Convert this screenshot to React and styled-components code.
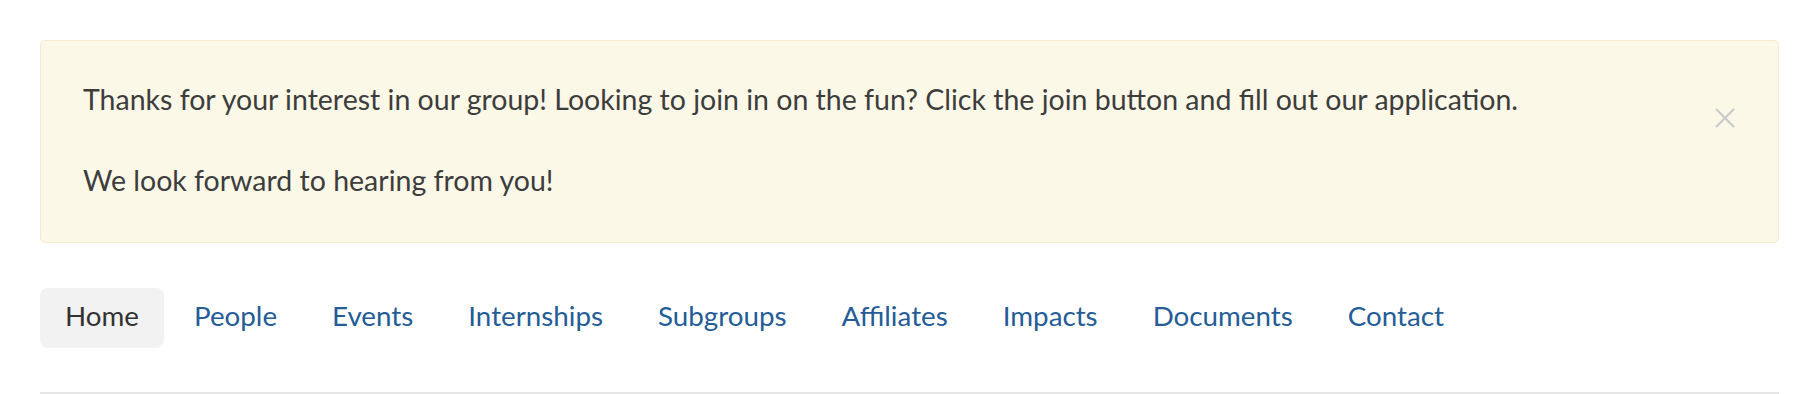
import React, { useState } from 'react';
import styled, { createGlobalStyle } from 'styled-components';

const GlobalStyle = createGlobalStyle`
  * { box-sizing: border-box; }
  body {
    margin: 0;
    background: #ffffff;
    font-family: Lato, "Open Sans", sans-serif;
    color: #3a3a3a;
  }
`;

const Page = styled.div`
  padding: 40px 23px 0 40px;
`;

const Alert = styled.div`
  position: relative;
  background-color: #fbf8e7;
  border: 1px solid #f6ebd2;
  border-radius: 5px;
  padding: 38px 100px 42px 42px;
  margin-bottom: 45px;
`;

const AlertText = styled.p`
  margin: 0;
  font-size: 28.5px;
  line-height: 40px;
  color: #3d3d3d;

  & + & {
    margin-top: 41px;
  }
`;

const CloseButton = styled.button`
  position: absolute;
  top: 66px;
  right: 42px;
  width: 22px;
  height: 22px;
  padding: 0;
  border: none;
  background: transparent;
  cursor: pointer;
  display: flex;
  align-items: center;
  justify-content: center;
`;

const NavBar = styled.nav`
  display: flex;
  gap: 5px;
  padding-bottom: 44px;
  border-bottom: 2px solid #e6e6e6;
`;

const NavLink = styled.a`
  display: block;
  padding: 0 25px 4px;
  height: 60px;
  line-height: 56px;
  border-radius: 8px;
  font-size: 27.75px;
  text-decoration: none;
  color: ${(p) => (p.$active ? '#333333' : '#245c97')};
  background: ${(p) => (p.$active ? '#f2f2f2' : 'transparent')};

  &:hover {
    background: #f2f2f2;
  }
`;

const links = [
  'Home',
  'People',
  'Events',
  'Internships',
  'Subgroups',
  'Affiliates',
  'Impacts',
  'Documents',
  'Contact',
];

const App = () => {
  const [open, setOpen] = useState(true);

  return (
    <Page>
      <GlobalStyle />
      {open && (
        <Alert>
          <AlertText>
            Thanks for your interest in our group! Looking to join in on the fun? Click the join button and fill out our application.
          </AlertText>
          <AlertText>We look forward to hearing from you!</AlertText>
          <CloseButton aria-label="Close" onClick={() => setOpen(false)}>
            <svg width="20" height="20" viewBox="0 0 20 20">
              <path d="M1 1 L19 19 M19 1 L1 19" stroke="#c9c9c9" strokeWidth="2.2" />
            </svg>
          </CloseButton>
        </Alert>
      )}
      <NavBar>
        {links.map((l, i) => (
          <NavLink key={l} href="#" $active={i === 0}>
            {l}
          </NavLink>
        ))}
      </NavBar>
    </Page>
  );
};

export default App;
